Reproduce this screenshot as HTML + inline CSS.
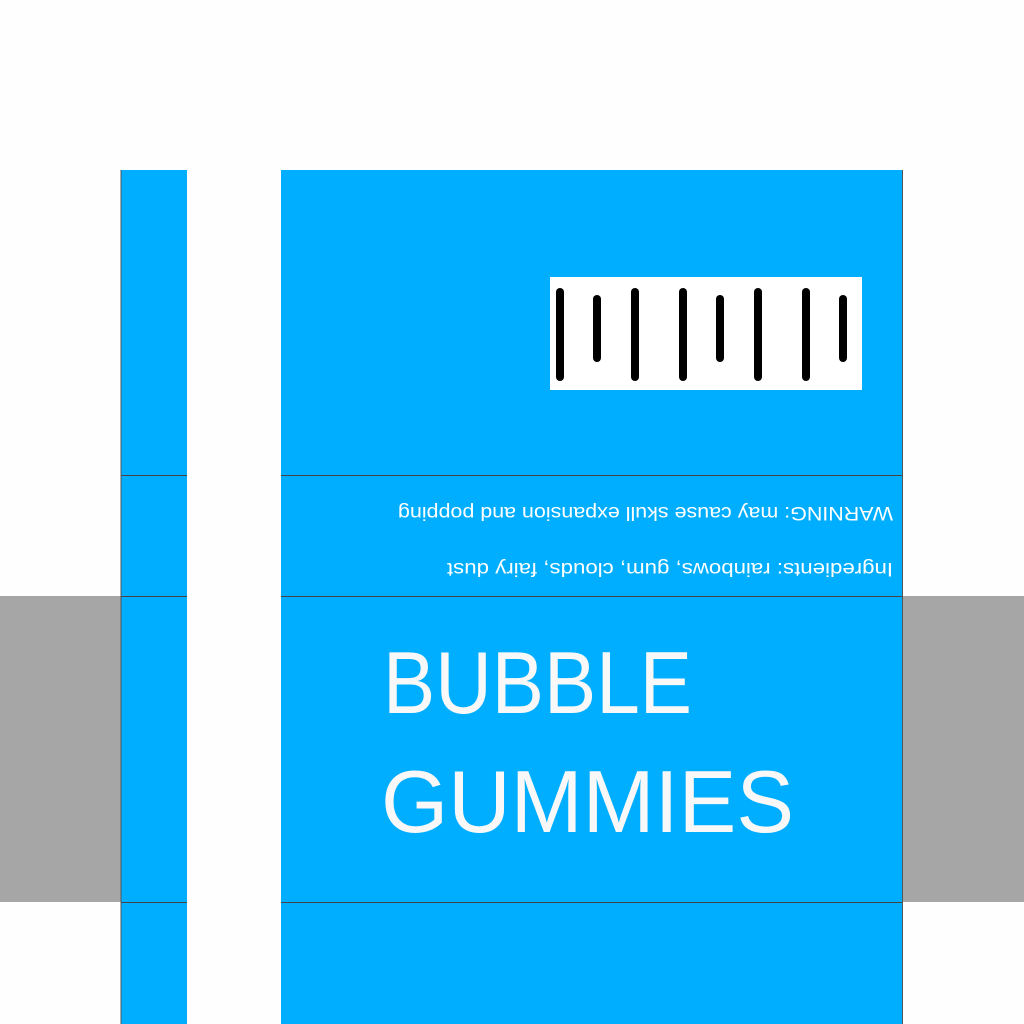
<!DOCTYPE html>
<html><head><meta charset="utf-8"><style>html,body{margin:0;padding:0;background:#fff;width:1024px;height:1024px;overflow:hidden}</style></head>
<body>
<svg width="1024" height="1024" viewBox="0 0 1024 1024" xmlns="http://www.w3.org/2000/svg">
<rect x="0" y="0" width="1024" height="1024" fill="#fefefe"/>
<rect x="0" y="596" width="121" height="306" fill="#a5a6a5"/>
<rect x="902" y="596" width="122" height="306" fill="#a5a6a5"/>
<rect x="121" y="170" width="66" height="854" fill="#00aeff"/>
<rect x="281" y="170" width="621" height="854" fill="#00aeff"/>
<line x1="121" y1="170" x2="121" y2="1024" stroke="#555" stroke-width="1"/>
<line x1="902.5" y1="170" x2="902.5" y2="1024" stroke="#555" stroke-width="1"/>
<g stroke="#444" stroke-width="1">
<line x1="121" y1="475.5" x2="187" y2="475.5"/><line x1="281" y1="475.5" x2="902" y2="475.5"/>
<line x1="121" y1="596.5" x2="187" y2="596.5"/><line x1="281" y1="596.5" x2="902" y2="596.5"/>
<line x1="121" y1="902.5" x2="187" y2="902.5"/><line x1="281" y1="902.5" x2="902" y2="902.5"/>
</g>
<rect x="550" y="277" width="312" height="113" fill="#fff"/>
<g stroke="#000" stroke-width="8" stroke-linecap="round">
<line x1="560" y1="292" x2="560" y2="377"/>
<line x1="597" y1="299" x2="597" y2="358"/>
<line x1="635" y1="292" x2="635" y2="377"/>
<line x1="683" y1="292" x2="683" y2="377"/>
<line x1="720" y1="299" x2="720" y2="358"/>
<line x1="758" y1="292" x2="758" y2="377"/>
<line x1="806" y1="292" x2="806" y2="377"/>
<line x1="843" y1="299" x2="843" y2="358"/>
</g>
<g font-family="Liberation Sans, sans-serif" fill="#fff">
<text transform="translate(893,507) rotate(180)" x="0" y="0" font-size="19" textLength="495" lengthAdjust="spacingAndGlyphs">WARNING: may cause skull expansion and popping</text>
<text transform="translate(893,563) rotate(180)" x="0" y="0" font-size="19" textLength="446" lengthAdjust="spacingAndGlyphs">Ingredients: rainbows, gum, clouds, fairy dust</text>
</g>
<g font-family="Liberation Sans, sans-serif" fill="#f8f8f8" font-size="88">
<text x="383" y="713" textLength="309" lengthAdjust="spacingAndGlyphs">BUBBLE</text>
<text x="381" y="832" textLength="413" lengthAdjust="spacingAndGlyphs">GUMMIES</text>
</g>
</svg>
</body></html>
